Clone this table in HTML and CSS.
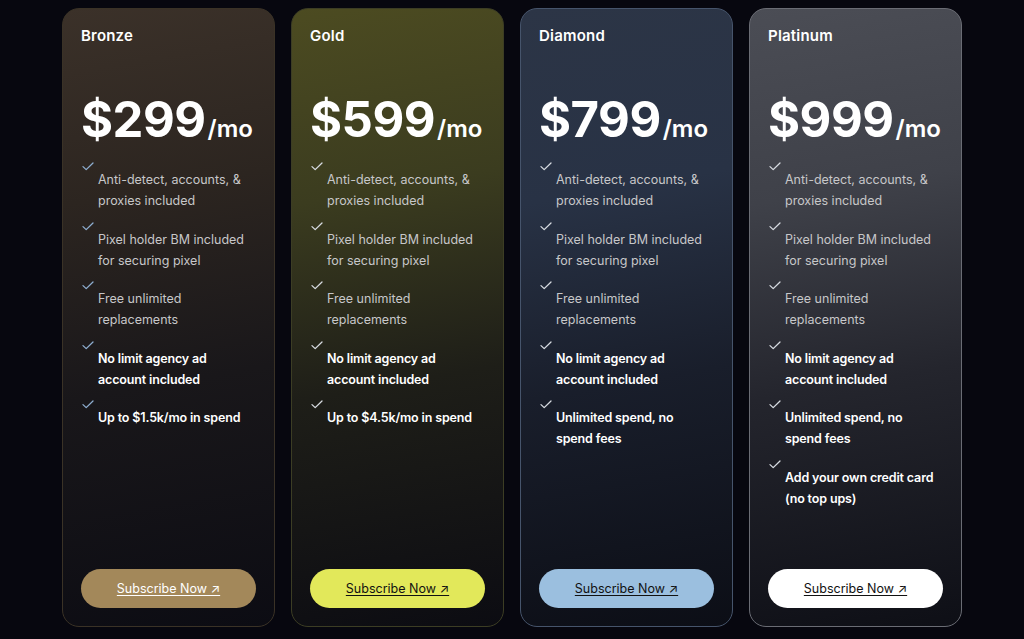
FILE: index.html
```html
<!DOCTYPE html>
<html lang="en">
<head>
<meta charset="utf-8">
<title>Pricing</title>
<link rel="stylesheet" href="styles.css">
</head>
<body>
<main class="plans">
  <section class="card bronze">
    <h2 class="name">Bronze</h2>
    <p class="price"><span class="amount">$299</span><span class="per">/mo</span></p>
    <ul class="features">
      <li><svg class="check" viewBox="0 0 12 9"><path d="M1 4.6 L4.2 7.6 L11 1"/></svg><span>Anti-detect, accounts, &amp; proxies included</span></li>
      <li><svg class="check" viewBox="0 0 12 9"><path d="M1 4.6 L4.2 7.6 L11 1"/></svg><span>Pixel holder BM included for securing pixel</span></li>
      <li><svg class="check" viewBox="0 0 12 9"><path d="M1 4.6 L4.2 7.6 L11 1"/></svg><span>Free unlimited replacements</span></li>
      <li class="strong"><svg class="check" viewBox="0 0 12 9"><path d="M1 4.6 L4.2 7.6 L11 1"/></svg><span>No limit agency ad account included</span></li>
      <li class="strong"><svg class="check" viewBox="0 0 12 9"><path d="M1 4.6 L4.2 7.6 L11 1"/></svg><span>Up to $1.5k/mo in spend</span></li>
    </ul>
    <a class="btn" href="#">Subscribe Now ↗</a>
  </section>
  <section class="card gold">
    <h2 class="name">Gold</h2>
    <p class="price"><span class="amount">$599</span><span class="per">/mo</span></p>
    <ul class="features">
      <li><svg class="check" viewBox="0 0 12 9"><path d="M1 4.6 L4.2 7.6 L11 1"/></svg><span>Anti-detect, accounts, &amp; proxies included</span></li>
      <li><svg class="check" viewBox="0 0 12 9"><path d="M1 4.6 L4.2 7.6 L11 1"/></svg><span>Pixel holder BM included for securing pixel</span></li>
      <li><svg class="check" viewBox="0 0 12 9"><path d="M1 4.6 L4.2 7.6 L11 1"/></svg><span>Free unlimited replacements</span></li>
      <li class="strong"><svg class="check" viewBox="0 0 12 9"><path d="M1 4.6 L4.2 7.6 L11 1"/></svg><span>No limit agency ad account included</span></li>
      <li class="strong"><svg class="check" viewBox="0 0 12 9"><path d="M1 4.6 L4.2 7.6 L11 1"/></svg><span>Up to $4.5k/mo in spend</span></li>
    </ul>
    <a class="btn" href="#">Subscribe Now ↗</a>
  </section>
  <section class="card diamond">
    <h2 class="name">Diamond</h2>
    <p class="price"><span class="amount">$799</span><span class="per">/mo</span></p>
    <ul class="features">
      <li><svg class="check" viewBox="0 0 12 9"><path d="M1 4.6 L4.2 7.6 L11 1"/></svg><span>Anti-detect, accounts, &amp; proxies included</span></li>
      <li><svg class="check" viewBox="0 0 12 9"><path d="M1 4.6 L4.2 7.6 L11 1"/></svg><span>Pixel holder BM included for securing pixel</span></li>
      <li><svg class="check" viewBox="0 0 12 9"><path d="M1 4.6 L4.2 7.6 L11 1"/></svg><span>Free unlimited replacements</span></li>
      <li class="strong"><svg class="check" viewBox="0 0 12 9"><path d="M1 4.6 L4.2 7.6 L11 1"/></svg><span>No limit agency ad account included</span></li>
      <li class="strong"><svg class="check" viewBox="0 0 12 9"><path d="M1 4.6 L4.2 7.6 L11 1"/></svg><span>Unlimited spend, no spend fees</span></li>
    </ul>
    <a class="btn" href="#">Subscribe Now ↗</a>
  </section>
  <section class="card platinum">
    <h2 class="name">Platinum</h2>
    <p class="price"><span class="amount">$999</span><span class="per">/mo</span></p>
    <ul class="features">
      <li><svg class="check" viewBox="0 0 12 9"><path d="M1 4.6 L4.2 7.6 L11 1"/></svg><span>Anti-detect, accounts, &amp; proxies included</span></li>
      <li><svg class="check" viewBox="0 0 12 9"><path d="M1 4.6 L4.2 7.6 L11 1"/></svg><span>Pixel holder BM included for securing pixel</span></li>
      <li><svg class="check" viewBox="0 0 12 9"><path d="M1 4.6 L4.2 7.6 L11 1"/></svg><span>Free unlimited replacements</span></li>
      <li class="strong"><svg class="check" viewBox="0 0 12 9"><path d="M1 4.6 L4.2 7.6 L11 1"/></svg><span>No limit agency ad account included</span></li>
      <li class="strong"><svg class="check" viewBox="0 0 12 9"><path d="M1 4.6 L4.2 7.6 L11 1"/></svg><span>Unlimited spend, no spend fees</span></li>
      <li class="strong"><svg class="check" viewBox="0 0 12 9"><path d="M1 4.6 L4.2 7.6 L11 1"/></svg><span>Add your own credit card (no top ups)</span></li>
    </ul>
    <a class="btn" href="#">Subscribe Now ↗</a>
  </section>
</main>
</body>
</html>
```

FILE: styles.css
```css
* { box-sizing: border-box; }
html, body { margin: 0; padding: 0; }
body {
  background: #07070f;
  font-family: Inter, "Liberation Sans", sans-serif;
  color: #fff;
  height: 639px;
  overflow: hidden;
}
.plans {
  display: flex;
  justify-content: center;
  gap: 16px;
  padding: 8px 0 0 0;
}
.card {
  width: 213px;
  height: 619px;
  border-radius: 17px;
  border: 1px solid rgba(255,255,255,0.12);
  padding: 17px 18px 18px 18px;
  display: flex;
  flex-direction: column;
}
.bronze {
  background: linear-gradient(170deg, #3b3129 0%, #2c2520 30%, #19171a 60%, #0c0c13 100%);
  border-color: #3a3226;
}
.gold {
  background: linear-gradient(170deg, #4c4b21 0%, #3b3c1f 30%, #1e1e18 60%, #0c0c12 100%);
  border-color: #3c3d24;
}
.diamond {
  background: linear-gradient(170deg, #2c3546 0%, #283245 30%, #191e2b 60%, #0c0e16 100%);
  border-color: #46546b;
}
.platinum {
  background: linear-gradient(170deg, #4b4d55 0%, #3f4149 30%, #24252d 60%, #0e0f16 100%);
  border-color: #6a6c74;
}
.name {
  margin: 0;
  font-size: 15px;
  line-height: 20px;
  font-weight: 600;
  letter-spacing: 0.2px;
}
.price {
  margin: 46px 0 0 0;
  display: flex;
  align-items: baseline;
  line-height: 56px;
}
.amount {
  font-size: 49px;
  font-weight: 700;
  letter-spacing: -0.5px;
}
.per {
  font-size: 24px;
  font-weight: 600;
  margin-left: 2px;
}
.features {
  list-style: none;
  margin: 5px 0 0 0;
  padding: 0;
  display: flex;
  flex-direction: column;
  gap: 10.5px;
  flex: 1;
}
.features li {
  display: flex;
  align-items: flex-start;
  font-size: 12.5px;
  line-height: 21px;
  color: #c7c7c9;
  letter-spacing: 0;
}
.features li.strong {
  color: #fff;
  font-weight: 600;
  letter-spacing: -0.15px;
}
.features span {
  margin-top: 7px;
  margin-left: 4px;
  padding-right: 6px;
}
.check {
  width: 12px;
  height: 9px;
  flex: none;
  margin-left: 1px;
  fill: none;
  stroke: #d8dce2;
  stroke-width: 1.3;
  stroke-linecap: round;
  stroke-linejoin: round;
}
.bronze .check { stroke: #8eaed0; }
.btn {
  display: block;
  height: 39px;
  line-height: 40px;
  border-radius: 20px;
  text-align: center;
  font-size: 12.5px;
  text-decoration: underline;
  text-underline-offset: 2px;
  color: #111;
}
.bronze .btn { background: #a3885a; color: #fff; }
.gold .btn { background: #e2e85a; }
.diamond .btn { background: #9bbfdf; }
.platinum .btn { background: #fff; }
```
